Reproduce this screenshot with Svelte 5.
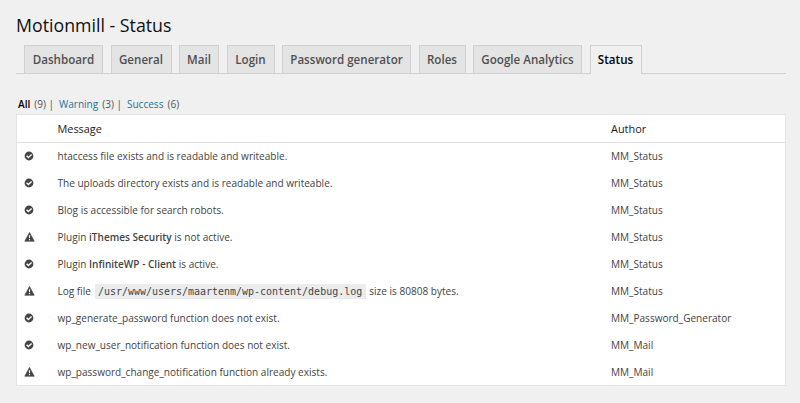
<script>
  const tabs = [
    { label: 'Dashboard', width: 79 },
    { label: 'General', width: 61 },
    { label: 'Mail', width: 40 },
    { label: 'Login', width: 48 },
    { label: 'Password generator', width: 129 },
    { label: 'Roles', width: 47 },
    { label: 'Google Analytics', width: 109 },
    { label: 'Status', width: 52, active: true },
  ];
  const rows = [
    { ok: true, parts: [{ text: 'htaccess file exists and is readable and writeable.' }], author: 'MM_Status' },
    { ok: true, parts: [{ text: 'The uploads directory exists and is readable and writeable.' }], author: 'MM_Status' },
    { ok: true, parts: [{ text: 'Blog is accessible for search robots.' }], author: 'MM_Status' },
    { ok: false, parts: [{ text: 'Plugin ' }, { strong: 'iThemes Security' }, { text: ' is not active.' }], author: 'MM_Status' },
    { ok: true, parts: [{ text: 'Plugin ' }, { strong: 'InfiniteWP - Client' }, { text: ' is active.' }], author: 'MM_Status' },
    { ok: false, parts: [{ text: 'Log file ' }, { code: '/usr/www/users/maartenm/wp-content/debug.log' }, { text: ' size is 80808 bytes.' }], author: 'MM_Status' },
    { ok: true, parts: [{ text: 'wp_generate_password function does not exist.' }], author: 'MM_Password_Generator' },
    { ok: true, parts: [{ text: 'wp_new_user_notification function does not exist.' }], author: 'MM_Mail' },
    { ok: false, parts: [{ text: 'wp_password_change_notification function already exists.' }], author: 'MM_Mail' },
  ];
</script>

<main>
  <h1>Motionmill - Status</h1>
  <nav class="tabs">
    {#each tabs as tab}
      <span class="tab" class:active={tab.active} style:width="{tab.width}px">{tab.label}</span>
    {/each}
  </nav>
  <div class="filters">
    <b>All</b><span class="count">(9)</span><span class="bar">|</span>
    <span class="link">Warning</span><span class="count">(3)</span><span class="bar">|</span>
    <span class="link">Success</span><span class="count">(6)</span>
  </div>
  <section class="table">
    <div class="row head"><span></span><span>Message</span><span>Author</span></div>
    {#each rows as row}
      <div class="row">
        <span class="icon">
          {#if row.ok}
            <svg width="10" height="10" viewBox="0 0 10 10">
              <circle cx="5" cy="5" r="4.4" fill="#444" />
              <path d="M2.6 4.8 4.4 6.6 7.6 3.4" fill="none" stroke="#fff" stroke-width="1.4" />
            </svg>
          {:else}
            <svg width="11" height="10" viewBox="0 0 11 10">
              <path d="M5.5 0.5 10.2 9.2H0.8Z" fill="#444" stroke="#444" stroke-width=".7" stroke-linejoin="round" />
              <path d="M4.8 3.2H6.2L5.9 6.3H5.1ZM4.9 7H6.1V8.2H4.9Z" fill="#fff" />
            </svg>
          {/if}
        </span>
        <span class="message">{#each row.parts as part}{#if part.strong}<b>{part.strong}</b>{:else if part.code}<code>{part.code}</code>{:else}{part.text}{/if}{/each}</span>
        <span>{row.author}</span>
      </div>
    {/each}
  </section>
</main>

<style>
  :global(body) { background: #f0f0f0; }
  main {
    box-sizing: border-box;
    height: 403px;
    padding: 13px 14px 0 16px;
    overflow: hidden;
    font-family: 'Open Sans', 'Noto Sans', sans-serif;
    font-size: 10.06px;
    color: #444;
  }
  h1 {
    margin: 0;
    height: 32px;
    line-height: 24px;
    font-size: 17.75px;
    font-weight: 400;
    color: #111;
  }
  .tabs {
    box-sizing: border-box;
    display: flex;
    gap: 7.5px;
    height: 29px;
    padding-left: 8px;
    border-bottom: 1px solid #d0d0d0;
  }
  .tab {
    box-sizing: border-box;
    flex: none;
    height: 28px;
    border: 1px solid #d0d0d0;
    border-bottom: 0;
    background: #e4e4e4;
    color: #505050;
    font-size: 11.6px;
    font-weight: 600;
    line-height: 28px;
    text-align: center;
    white-space: nowrap;
  }
  .tab.active { height: 29px; background: #f0f0f0; color: #000; }
  .filters {
    display: flex;
    height: 16px;
    margin: 22px 0 2px 2px;
    line-height: 16px;
    color: #555;
  }
  .filters b { color: #000; }
  .count { margin-left: 4px; }
  .bar { margin: 0 5px 0 2.5px; }
  .link { color: #1874a0; }
  .table {
    box-sizing: border-box;
    height: 272px;
    border: 1px solid #e4e4e4;
    background: #fff;
  }
  .row {
    display: grid;
    grid-template-columns: 40.5px 553.5px 1fr;
    height: 27px;
    line-height: 27px;
  }
  .head {
    border-bottom: 1px solid #e4e4e4;
    font-size: 10.9px;
    color: #222;
  }
  .icon { display: flex; align-items: center; padding: 0 0 2px 7px; }
  .message { white-space: pre; }
  b { font-weight: 600; }
  code {
    margin: 0 1px;
    padding: 2px 3.5px;
    background: #ececec;
    font-family: 'DejaVu Sans Mono', monospace;
    font-size: 9.97px;
  }
</style>
